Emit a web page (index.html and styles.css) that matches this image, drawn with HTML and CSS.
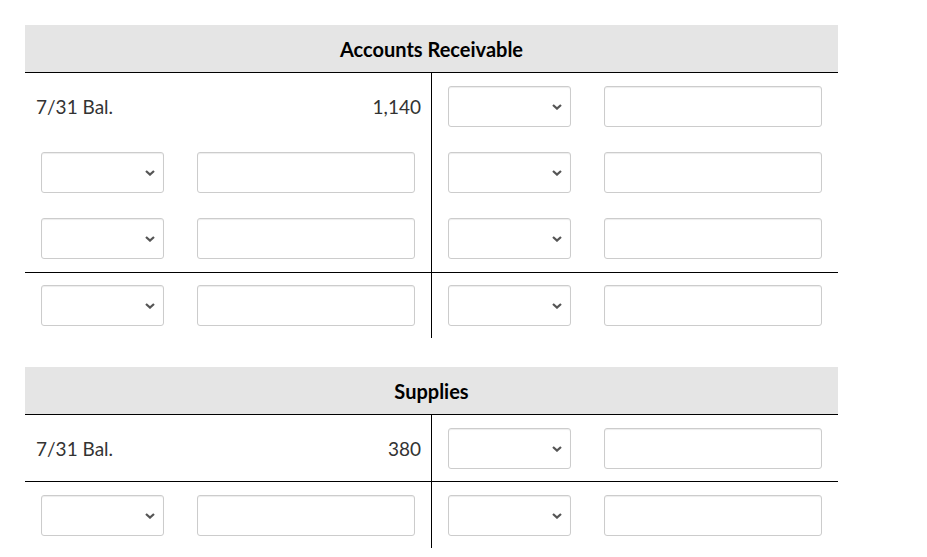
FILE: index.html
```html
<!DOCTYPE html>
<html lang="en">
<head>
<meta charset="utf-8">
<title>T-Accounts</title>
<link rel="stylesheet" href="styles.css">
</head>
<body>
<div class="page">
  <section class="taccount">
    <div class="t-head">Accounts Receivable</div>
    <div class="t-body">
      <div class="cell left bal"><span>7/31 Bal.</span><span>1,140</span></div>
      <div class="cell right">
        <div class="select"><svg width="10" height="6" viewBox="0 0 10 6"><path d="M1 1 L5 4.6 L9 1" fill="none" stroke="#555" stroke-width="2.2"/></svg></div>
        <input class="amt" type="text">
      </div>

      <div class="cell left">
        <div class="select"><svg width="10" height="6" viewBox="0 0 10 6"><path d="M1 1 L5 4.6 L9 1" fill="none" stroke="#555" stroke-width="2.2"/></svg></div>
        <input class="amt" type="text">
      </div>
      <div class="cell right">
        <div class="select"><svg width="10" height="6" viewBox="0 0 10 6"><path d="M1 1 L5 4.6 L9 1" fill="none" stroke="#555" stroke-width="2.2"/></svg></div>
        <input class="amt" type="text">
      </div>

      <div class="cell left pre-total">
        <div class="select"><svg width="10" height="6" viewBox="0 0 10 6"><path d="M1 1 L5 4.6 L9 1" fill="none" stroke="#555" stroke-width="2.2"/></svg></div>
        <input class="amt" type="text">
      </div>
      <div class="cell right pre-total">
        <div class="select"><svg width="10" height="6" viewBox="0 0 10 6"><path d="M1 1 L5 4.6 L9 1" fill="none" stroke="#555" stroke-width="2.2"/></svg></div>
        <input class="amt" type="text">
      </div>

      <div class="cell left total tight">
        <div class="select"><svg width="10" height="6" viewBox="0 0 10 6"><path d="M1 1 L5 4.6 L9 1" fill="none" stroke="#555" stroke-width="2.2"/></svg></div>
        <input class="amt" type="text">
      </div>
      <div class="cell right total tight">
        <div class="select"><svg width="10" height="6" viewBox="0 0 10 6"><path d="M1 1 L5 4.6 L9 1" fill="none" stroke="#555" stroke-width="2.2"/></svg></div>
        <input class="amt" type="text">
      </div>
    </div>
  </section>

  <section class="taccount">
    <div class="t-head">Supplies</div>
    <div class="t-body">
      <div class="cell left bal"><span>7/31 Bal.</span><span>380</span></div>
      <div class="cell right">
        <div class="select"><svg width="10" height="6" viewBox="0 0 10 6"><path d="M1 1 L5 4.6 L9 1" fill="none" stroke="#555" stroke-width="2.2"/></svg></div>
        <input class="amt" type="text">
      </div>

      <div class="cell left total">
        <div class="select"><svg width="10" height="6" viewBox="0 0 10 6"><path d="M1 1 L5 4.6 L9 1" fill="none" stroke="#555" stroke-width="2.2"/></svg></div>
        <input class="amt" type="text">
      </div>
      <div class="cell right total">
        <div class="select"><svg width="10" height="6" viewBox="0 0 10 6"><path d="M1 1 L5 4.6 L9 1" fill="none" stroke="#555" stroke-width="2.2"/></svg></div>
        <input class="amt" type="text">
      </div>
    </div>
  </section>
</div>
</body>
</html>
```

FILE: styles.css
```css
* { box-sizing: border-box; }

html, body {
  margin: 0;
  padding: 0;
  background: #fff;
}

body {
  font-family: Lato, "Open Sans", "Liberation Sans", sans-serif;
  color: #333;
}

.page {
  padding: 25px 0 0 25px;
}

.taccount {
  width: 813px;
  margin-bottom: 29px;
}

.t-head {
  height: 48px;
  background: #e5e5e5;
  border-bottom: 1px solid #000;
  display: flex;
  align-items: center;
  justify-content: center;
  font-weight: 700;
  font-size: 20px;
  color: #000;
}

.t-body {
  display: grid;
  grid-template-columns: 407px 406px;
}

.cell {
  height: 66px;
  padding: 13px 16px 12px;
  display: flex;
  align-items: center;
  gap: 33px;
}

.cell.left {
  border-right: 1px solid #000;
}

.cell.pre-total {
  height: 67px;
  padding-bottom: 13px;
}

.cell.total {
  height: 67px;
  border-top: 1px solid #000;
}

.cell.total.tight {
  height: 66px;
  padding-top: 12px;
}

.cell.bal {
  justify-content: space-between;
  padding: 0 10px 0 11px;
  font-size: 19px;
  color: #333;
}

.select {
  width: 123px;
  height: 41px;
  flex: none;
  border: 1px solid #ccc;
  border-radius: 3px;
  background: #fff;
  box-shadow: inset 0 1px 1px rgba(0, 0, 0, 0.075);
  display: flex;
  align-items: center;
  justify-content: flex-end;
  padding-right: 8px;
}

.select svg {
  display: block;
}

.amt {
  width: 218px;
  height: 41px;
  flex: none;
  margin: 0;
  border: 1px solid #ccc;
  border-radius: 3px;
  background: #fff;
  box-shadow: inset 0 1px 1px rgba(0, 0, 0, 0.075);
  font: inherit;
  padding: 0 8px;
}
```
